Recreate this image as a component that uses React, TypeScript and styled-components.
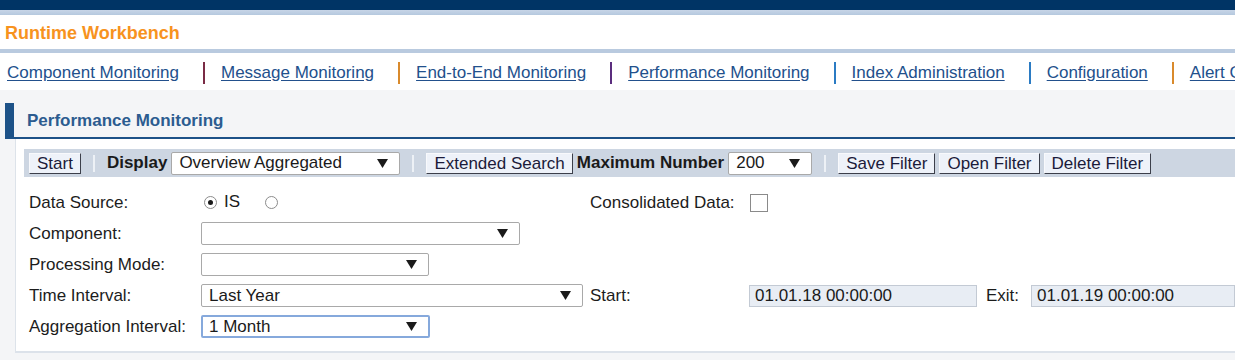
import React, { FC } from 'react';
import styled, { createGlobalStyle } from 'styled-components';

const GlobalStyle = createGlobalStyle`
  html, body {
    margin: 0;
    padding: 0;
    background: #f4f5f7;
    overflow: hidden;
  }
  body {
    font-family: 'Liberation Sans', Arial, sans-serif;
    font-size: 17px;
    color: #1c1c1c;
  }
`;

const TopBar = styled.div`
  height: 10px;
  background: #003465;
`;

const TopBand = styled.div`
  height: 5px;
  background: linear-gradient(#c7d5e7, #b5c8de);
`;

const Header = styled.div`
  height: 32px;
  padding: 2px 0 0 5px;
  background: #fff;
  display: flex;
  align-items: center;
  border-bottom: 4px solid #b9cadf;
`;

const AppTitle = styled.h1`
  margin: 0;
  font-size: 18px;
  font-weight: bold;
  color: #f7931e;
`;

const Nav = styled.nav`
  height: 35px;
  padding: 2px 0 0 7px;
  background: #fff;
  display: flex;
  align-items: center;
  white-space: nowrap;
  overflow: hidden;
`;

const NavLink = styled.a`
  color: #22508c;
  text-decoration: underline;
  text-underline-offset: 2px;
  cursor: pointer;
`;

const NavSep = styled.span<{ $color: string }>`
  display: inline-block;
  width: 2px;
  height: 22px;
  margin: 0 16px 0 24px;
  background: ${(p) => p.$color};
  flex-shrink: 0;
`;

const Panel = styled.section`
  margin: 13px 0 0 5px;
`;

const PanelHeader = styled.div`
  display: flex;
  height: 36px;
`;

const AccentBar = styled.div`
  width: 9px;
  background: #1d5288;
`;

const PanelTitle = styled.h2`
  flex: 1;
  margin: 0;
  display: flex;
  align-items: center;
  padding: 1px 0 0 13px;
  font-size: 17px;
  font-weight: bold;
  color: #2c5c90;
  border-bottom: 2px solid #1d5288;
`;

const PanelBody = styled.div`
  margin-left: 10px;
  background: #fff;
  border-left: 1px solid #dde3ea;
  border-bottom: 2px solid #dce2ea;
  padding: 10px 0 9px 8px;
`;

const Toolbar = styled.div`
  height: 28px;
  background: #cdd6e2;
  display: flex;
  align-items: center;
  gap: 4px;
  padding-left: 5px;
  white-space: nowrap;
`;

const ToolSep = styled.span`
  width: 2px;
  height: 17px;
  margin: 0 8px;
  background: #edf1f6;
`;

const ToolButton = styled.button`
  height: 21px;
  padding: 0 7px;
  font-family: inherit;
  font-size: 17px;
  line-height: 19px;
  color: #1b1b3a;
  background: #eef2f9;
  border: 1px solid;
  border-color: #f8f9fc #3c3f4a #3c3f4a #f8f9fc;
  border-radius: 0;
`;

const ToolLabel = styled.span`
  font-weight: bold;
  color: #1a1a1a;
`;

const SelectBox = styled.div<{ $width: number; $focused?: boolean }>`
  box-sizing: border-box;
  width: ${(p) => p.$width}px;
  height: 23px;
  display: flex;
  align-items: center;
  justify-content: space-between;
  padding: 0 11px 0 ${(p) => (p.$focused ? 6 : 7)}px;
  background: #fff;
  border: ${(p) => (p.$focused ? '2px solid #86a9dc' : '1px solid #a9a9a9')};
  border-radius: 2px;
  color: #1a1a1a;
  white-space: nowrap;
`;

const Arrow: FC = () => (
  <svg width="11" height="9" viewBox="0 0 11 9">
    <polygon points="0,0 11,0 5.5,9" fill="#1a1a1a" />
  </svg>
);

const Select: FC<{ width: number; value?: string; focused?: boolean }> = ({
  width,
  value,
  focused,
}) => (
  <SelectBox $width={width} $focused={focused}>
    <span>{value}</span>
    <Arrow />
  </SelectBox>
);

const Form = styled.div`
  display: grid;
  grid-template-columns: 172px 389px 159px 237px 45px 1fr;
  grid-auto-rows: 31px;
  align-items: center;
  padding: 10px 0 0 5px;
  white-space: nowrap;
`;

const Label = styled.span`
  color: #1c1c1c;
`;

const RadioGroup = styled.div`
  display: flex;
  align-items: center;
  align-self: start;
  margin-top: 5px;
  padding-left: 3px;
`;

const Radio = styled.span<{ $checked?: boolean }>`
  box-sizing: border-box;
  width: 13px;
  height: 13px;
  border-radius: 50%;
  border: 1px solid #8c8c8c;
  background: #fff;
  display: inline-flex;
  align-items: center;
  justify-content: center;
  margin-right: 7px;

  &::after {
    content: '';
    width: 5px;
    height: 5px;
    border-radius: 50%;
    background: ${(p) => (p.$checked ? '#1a1a1a' : 'transparent')};
  }
`;

const RadioText = styled.span`
  margin-right: 25px;
`;

const Checkbox = styled.span`
  box-sizing: border-box;
  width: 18px;
  height: 18px;
  border: 1px solid #8a8a8a;
  background: #fff;
  margin-left: 1px;
`;

const ReadOnlyField = styled.div<{ $width?: number }>`
  box-sizing: border-box;
  width: ${(p) => (p.$width ? `${p.$width}px` : '100%')};
  height: 22px;
  display: flex;
  align-items: center;
  padding-left: 5px;
  background: #e8edf4;
  border: 1px solid #c3cad4;
  color: #1a1a1a;
`;

const navItems = [
  { label: 'Component Monitoring', sep: '#7a2b45' },
  { label: 'Message Monitoring', sep: '#d98a2c' },
  { label: 'End-to-End Monitoring', sep: '#5b2d7e' },
  { label: 'Performance Monitoring', sep: '#2b7bc3' },
  { label: 'Index Administration', sep: '#2b7bc3' },
  { label: 'Configuration', sep: '#d98a2c' },
  { label: 'Alert Configuration', sep: '' },
];

const App: FC = () => (
  <>
    <GlobalStyle />
    <TopBar />
    <TopBand />
    <Header>
      <AppTitle>Runtime Workbench</AppTitle>
    </Header>
    <Nav>
      {navItems.map((item) => (
        <React.Fragment key={item.label}>
          <NavLink>{item.label}</NavLink>
          {item.sep && <NavSep $color={item.sep} />}
        </React.Fragment>
      ))}
    </Nav>
    <Panel>
      <PanelHeader>
        <AccentBar />
        <PanelTitle>Performance Monitoring</PanelTitle>
      </PanelHeader>
      <PanelBody>
        <Toolbar>
          <ToolButton>Start</ToolButton>
          <ToolSep />
          <ToolLabel>Display</ToolLabel>
          <Select width={229} value="Overview Aggregated" />
          <ToolSep />
          <ToolButton>Extended Search</ToolButton>
          <ToolLabel>Maximum Number</ToolLabel>
          <Select width={84} value="200" />
          <ToolSep />
          <ToolButton>Save Filter</ToolButton>
          <ToolButton>Open Filter</ToolButton>
          <ToolButton>Delete Filter</ToolButton>
        </Toolbar>
        <Form>
          <Label>Data Source:</Label>
          <RadioGroup>
            <Radio $checked />
            <RadioText>IS</RadioText>
            <Radio />
          </RadioGroup>
          <Label>Consolidated Data:</Label>
          <Checkbox />
          <span />
          <span />

          <Label>Component:</Label>
          <Select width={319} />
          <span />
          <span />
          <span />
          <span />

          <Label>Processing Mode:</Label>
          <Select width={228} />
          <span />
          <span />
          <span />
          <span />

          <Label>Time Interval:</Label>
          <Select width={382} value="Last Year" />
          <Label>Start:</Label>
          <ReadOnlyField $width={228}>01.01.18 00:00:00</ReadOnlyField>
          <Label>Exit:</Label>
          <ReadOnlyField>01.01.19 00:00:00</ReadOnlyField>

          <Label>Aggregation Interval:</Label>
          <Select width={229} value="1 Month" focused />
        </Form>
      </PanelBody>
    </Panel>
  </>
);

export default App;
